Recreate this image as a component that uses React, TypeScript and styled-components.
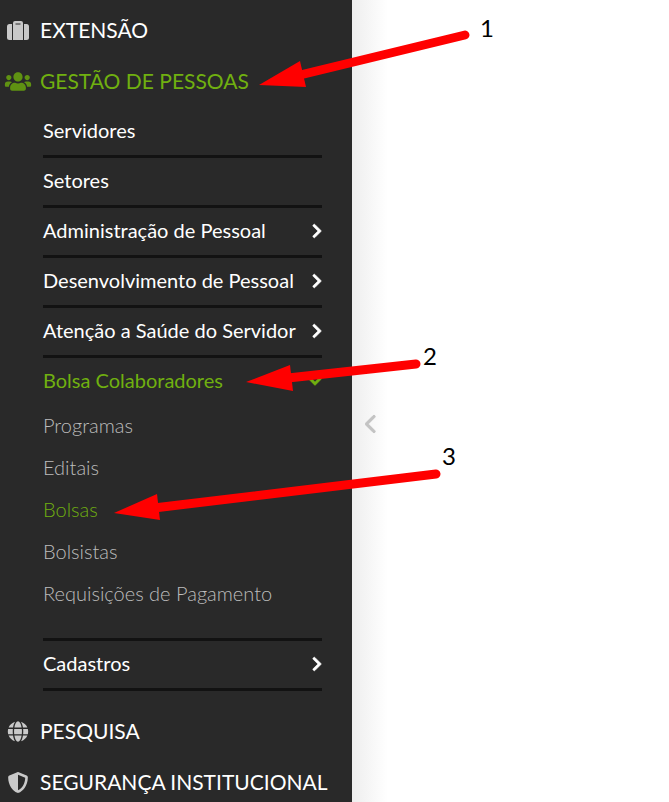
import React from "react";
import styled, { createGlobalStyle } from "styled-components";
import {
  FaChevronDown,
  FaChevronRight,
  FaGlobe,
  FaShieldAlt,
  FaUsers,
} from "react-icons/fa";
import { FaChevronLeft } from "react-icons/fa6";

const GREEN = "#70b010";

const GlobalStyle = createGlobalStyle`
  *, *::before, *::after { box-sizing: border-box; }
  body { margin: 0; background: #fff; font-family: Lato, "Open Sans", sans-serif; }
  ul { list-style: none; margin: 0; padding: 0; }
  a { text-decoration: none; }
`;

const Page = styled.div`
  position: relative;
  display: flex;
  height: 100vh;
  overflow: hidden;
`;

const Sidebar = styled.nav`
  flex: 0 0 352px;
  overflow: hidden;
  padding-top: 5px;
  background: #292929;
`;

const Content = styled.main`
  flex: 1;
  display: flex;
  align-items: flex-start;
  padding: 412px 0 0 11px;
  background: linear-gradient(to right, #eeeeee, #ffffff 36px);
`;

const CollapseButton = styled.button`
  display: flex;
  padding: 2px;
  border: 0;
  background: none;
  color: #c3c3c3;
  cursor: pointer;

  svg {
    width: 13px;
    height: 20px;
    stroke: currentColor;
    stroke-width: 24px;
  }
`;

const ModuleLink = styled.a<{ $active?: boolean }>`
  display: flex;
  align-items: center;
  height: 51px;
  padding: 0 0 2px 4px;
  color: ${(p) => (p.$active ? GREEN : "#fff")};
  font-size: 21px;
  line-height: 26px;
  white-space: nowrap;
`;

const ModuleIcon = styled.span<{ $active?: boolean }>`
  display: flex;
  justify-content: center;
  width: 28px;
  padding-top: 1px;
  margin-right: 8px;
  color: ${(p) => (p.$active ? "#5f9212" : "#c9c9c9")};

  svg {
    width: 28px;
    height: 21px;
  }
`;

const Submenu = styled.ul`
  margin: 1px 30px 15px 43px;
`;

const SubmenuItem = styled.li`
  border-bottom: 3px solid #121212;
`;

const SubmenuRow = styled.a<{ $active?: boolean }>`
  display: flex;
  align-items: center;
  justify-content: space-between;
  width: 100%;
  height: 47px;
  padding: 0 0 4px;
  border: 0;
  background: none;
  color: ${(p) => (p.$active ? GREEN : "#fff")};
  font-family: inherit;
  font-size: 20px;
  line-height: 24px;
  text-align: left;
  white-space: nowrap;
  cursor: pointer;
`;

const Mark = styled.span<{ $open?: boolean }>`
  display: flex;
  padding-top: 2px;

  svg {
    width: ${(p) => (p.$open ? 14 : 10)}px;
    height: 16px;
    stroke: currentColor;
    stroke-width: 20px;
  }
`;

const PageList = styled.ul`
  margin-top: -1px;
  padding-bottom: 24px;
`;

const PageLink = styled.a<{ $active?: boolean }>`
  display: flex;
  align-items: center;
  height: 42px;
  color: ${(p) => (p.$active ? GREEN : "#bdbdbd")};
  font-size: 20px;
  font-weight: 300;
  line-height: 24px;
`;

const Annotations = styled.svg`
  position: absolute;
  top: 0;
  left: 0;
  width: 669px;
  height: 802px;
  pointer-events: none;

  line {
    stroke: #f00;
    stroke-width: 9px;
    stroke-linecap: round;
  }

  polygon {
    fill: #f00;
  }

  text {
    fill: #000;
    font-size: 24px;
  }
`;

const pages = ["Programas", "Editais", "Bolsas", "Bolsistas", "Requisições de Pagamento"];

function LuggageIcon() {
  return (
    <svg viewBox="0 0 28 21" fill="currentColor" aria-hidden="true">
      <path d="M5.5 4H8V20H5.500Q3 20 3 17.500V6.500Q3 4 5.500 4Z" />
      <path d="M20 4H22.500Q25 4 25 6.500V17.500Q25 20 22.500 20H20Z" />
      <path
        fillRule="evenodd"
        d="M9 20V3Q9 1 11 1H17Q19 1 19 3V20ZM11.500 3.500V4.500H16.500V3.500Z"
      />
    </svg>
  );
}

function Group({ label }: { label: string }) {
  return (
    <SubmenuItem>
      <SubmenuRow as="button" type="button" aria-expanded={false}>
        {label}
        <Mark>
          <FaChevronRight />
        </Mark>
      </SubmenuRow>
    </SubmenuItem>
  );
}

function Module({
  label,
  icon,
  active,
}: {
  label: string;
  icon: React.ReactNode;
  active?: boolean;
}) {
  return (
    <ModuleLink href="#" $active={active}>
      <ModuleIcon $active={active}>{icon}</ModuleIcon>
      {label}
    </ModuleLink>
  );
}

export default function App() {
  return (
    <>
      <GlobalStyle />
      <Page>
        <Sidebar>
          <Module label="EXTENSÃO" icon={<LuggageIcon />} />
          <Module label="GESTÃO DE PESSOAS" icon={<FaUsers />} active />
          <Submenu>
            <SubmenuItem>
              <SubmenuRow href="#">Servidores</SubmenuRow>
            </SubmenuItem>
            <SubmenuItem>
              <SubmenuRow href="#">Setores</SubmenuRow>
            </SubmenuItem>
            <Group label="Administração de Pessoal" />
            <Group label="Desenvolvimento de Pessoal" />
            <Group label="Atenção a Saúde do Servidor" />
            <SubmenuItem>
              <SubmenuRow as="button" type="button" aria-expanded $active>
                Bolsa Colaboradores
                <Mark $open>
                  <FaChevronDown />
                </Mark>
              </SubmenuRow>
              <PageList>
                {pages.map((page) => (
                  <li key={page}>
                    <PageLink href="#" $active={page === "Bolsas"}>
                      {page}
                    </PageLink>
                  </li>
                ))}
              </PageList>
            </SubmenuItem>
            <Group label="Cadastros" />
          </Submenu>
          <Module label="PESQUISA" icon={<FaGlobe />} />
          <Module label="SEGURANÇA INSTITUCIONAL" icon={<FaShieldAlt />} />
        </Sidebar>
        <Content>
          <CollapseButton type="button" aria-label="Recolher menu">
            <FaChevronLeft />
          </CollapseButton>
        </Content>
        <Annotations viewBox="0 0 669 802">
          <line x1="465" y1="35" x2="300" y2="75" />
          <polygon points="259,85 300,61 306,87" />
          <text x="480" y="37">1</text>
          <line x1="416" y1="364" x2="288" y2="378" />
          <polygon points="246,382 290,365 293,391" />
          <text x="423" y="365">2</text>
          <line x1="436" y1="474" x2="154" y2="508" />
          <polygon points="114,513 157,494 160,520" />
          <text x="442" y="465">3</text>
        </Annotations>
      </Page>
    </>
  );
}
